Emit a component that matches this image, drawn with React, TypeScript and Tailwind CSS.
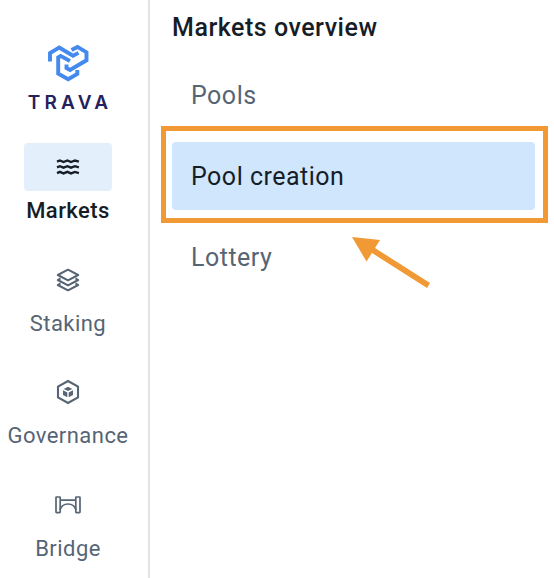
import React from "react";

function Logo() {
  return (
    <svg width="44" height="42" viewBox="0 0 44 42" fill="none" stroke="#4389ee" strokeWidth="3.9">
      <path d="M4 18.500V10L13.200 4.600 27 12.800 32.500 9.900" />
      <path d="M25.500 6.900L31.500 3.900 40.500 9.300V17.300L24 27 20.500 25V21.500" />
      <path d="M24 18L14.600 12.900 12.200 14.300V30.600L22.200 36.300 31.300 31V27" />
    </svg>
  );
}

function WavesIcon() {
  const d = "l2.900-1.200 3.600 1.500 3.900-1.500 3.600 1.500 3.900-1.500 4 1.200";
  return (
    <svg width="24" height="18" viewBox="0 0 24 18" fill="none" stroke="#161d26" strokeWidth="2.4">
      <path d={`M1 3.7${d}`} /><path d={`M1 9.4${d}`} /><path d={`M1 15.1${d}`} />
    </svg>
  );
}

function StackIcon() {
  return (
    <svg width="24" height="24" viewBox="0 0 24 24" fill="none" stroke="#566474" strokeWidth="2" strokeLinejoin="round">
      <path d="M12 1.7L22.2 7 12 12.4 1.8 7z" />
      <path d="M4.5 10.3L1.8 12 12 17.4 22.2 12l-2.7-1.7M4.5 15.3L1.8 17 12 22.3 22.2 17l-2.7-1.7" />
    </svg>
  );
}

function CubeIcon() {
  return (
    <svg width="24" height="26" viewBox="0 0 24 26" fill="none">
      <path d="M12 2l10 5.6v10.800L12 24 2 18.400V7.600z" stroke="#566474" strokeWidth="2.1" />
      <path d="M12 7.800l4.300 2.100-4.300 2.200-4.300-2.200zM7 11.200l4.300 2.200v4.900L7 16zM17 11.200l-4.300 2.200v4.900L17 16z" fill="#566474" />
    </svg>
  );
}

function BridgeIcon() {
  return (
    <svg width="28" height="20" viewBox="0 0 28 20" fill="none" stroke="#566474" strokeWidth="1.7">
      <rect x="2" y="2" width="4.2" height="15.6" rx=".6" />
      <rect x="21.8" y="2" width="4.2" height="15.6" rx=".6" />
      <path d="M6 5.2h16M6 15c1-3.600 4.200-6 8-6s7 2.400 8 6" />
    </svg>
  );
}

function NavItem({ icon, label, active = false }: { icon: React.ReactNode; label: string; active?: boolean }) {
  return (
    <a className="flex h-[112.5px] w-full shrink-0 flex-col items-center">
      <span className={`flex h-12 w-[88px] items-center justify-center rounded-[4px] ${active ? "bg-[#e3f0fb]" : ""}`}>{icon}</span>
      <span className={`mt-[5px] whitespace-nowrap text-[22px] leading-[30px] tracking-[0.45px] ${active ? "font-medium text-[#161d26]" : "text-[#566474]"}`}>{label}</span>
    </a>
  );
}

export default function App() {
  return (
    <div className="relative flex h-[578px] w-[554px] overflow-hidden bg-white font-['Roboto',sans-serif]">
      <aside className="flex w-[150px] shrink-0 flex-col border-r-2 border-[#e3e4e6] pr-3">
        <div className="flex h-[143px] shrink-0 flex-col items-center pt-[43px]">
          <Logo />
          <span className="mt-1.5 pl-1 font-['Inter',sans-serif] text-[19px] font-semibold leading-6 tracking-[4.2px] text-[#25215e]">TRAVA</span>
        </div>
        <nav className="flex flex-col">
          <NavItem icon={<WavesIcon />} label="Markets" active />
          <NavItem icon={<StackIcon />} label="Staking" />
          <NavItem icon={<CubeIcon />} label="Governance" />
          <NavItem icon={<BridgeIcon />} label="Bridge" />
        </nav>
      </aside>
      <main className="flex flex-1 flex-col pl-[22px] pr-[19px] pt-[11px]">
        <h1 className="text-[25px] font-medium leading-[34px] tracking-[0.52px] text-[#161d26]">Markets overview</h1>
        <div className="mt-4 flex flex-col gap-[13px] text-[25px] tracking-[0.5px] text-[#566474]">
          <a className="flex h-[68px] items-center rounded-[4px] px-[19px] pt-0.5">Pools</a>
          <a className="flex h-[68px] items-center rounded-[4px] bg-[#cfe6fd] px-[19px] pt-0.5 text-[#161d26]">Pool creation</a>
          <a className="flex h-[68px] items-center rounded-[4px] px-[19px] pt-0.5">Lottery</a>
        </div>
      </main>
      <div className="absolute left-[161px] top-[126px] h-[97px] w-[387px] border-[5px] border-[#f09935]" />
      <svg className="absolute left-[350px] top-[235px]" width="82" height="54" viewBox="0 0 82 54">
        <path d="M2 2l28 3-5 8L80 48l-3 5L22 18l-5.500 8.500z" fill="#f09935" />
      </svg>
    </div>
  );
}
